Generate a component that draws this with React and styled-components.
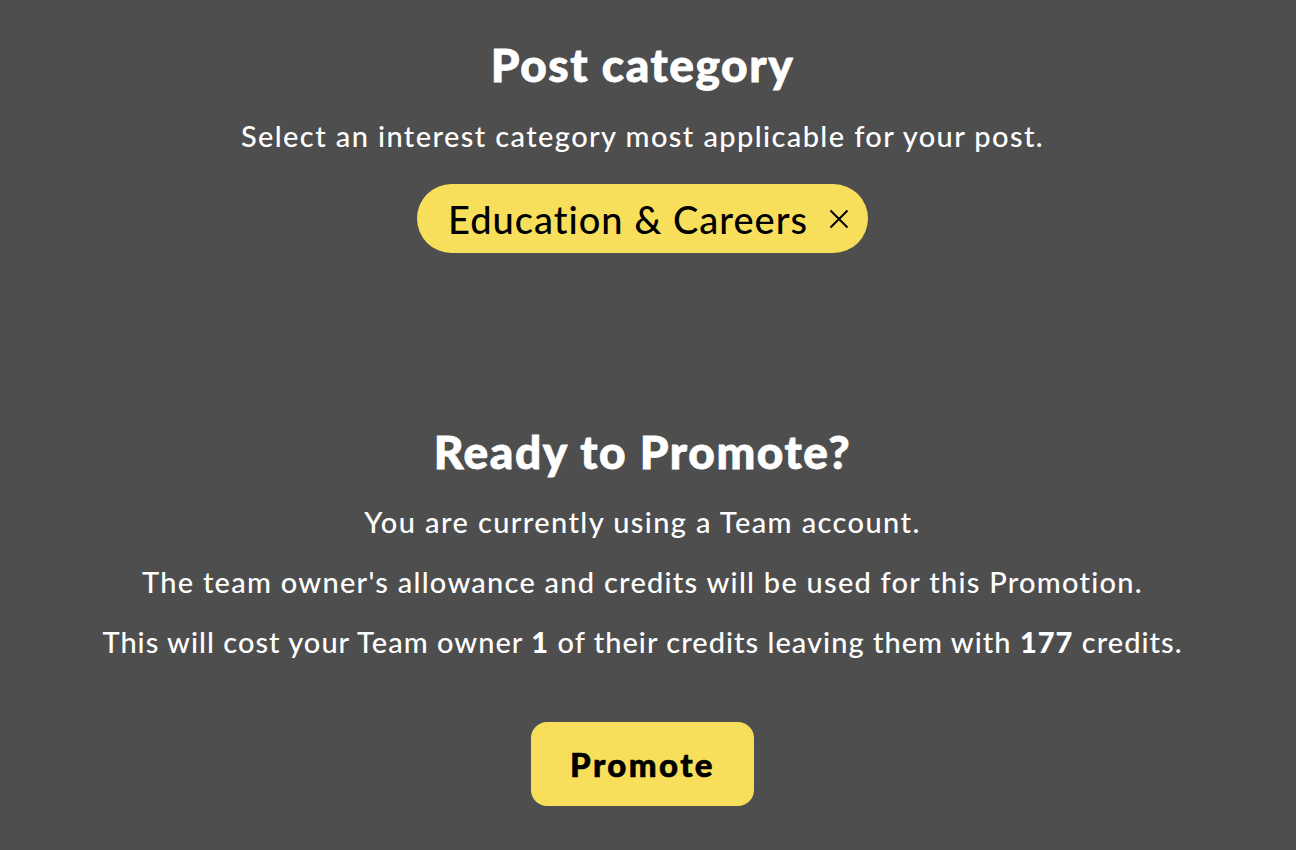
import React from "react";
import styled, { createGlobalStyle } from "styled-components";

const Global = createGlobalStyle`
  html, body { margin: 0; padding: 0; background: #4e4e4e; }
  body { font-family: Lato, "Noto Sans", sans-serif; color: #ffffff; }
`;

const Page = styled.main`
  min-height: 850px;
  display: flex;
  flex-direction: column;
  align-items: center;
  padding: 37px 11px 0 0;
  box-sizing: border-box;
`;

const Section = styled.section`
  display: flex;
  flex-direction: column;
  align-items: center;
  text-align: center;
  margin-top: ${(p) => p.$mt || 0}px;
`;

const Title = styled.h2`
  margin: 0;
  font-size: 46px;
  font-weight: 900;
  line-height: 56px;
  letter-spacing: 1.6px;
  -webkit-text-stroke: 0.8px #ffffff;
`;

const Text = styled.p`
  margin: ${(p) => p.$mt || 0}px 0 0;
  font-size: 29px;
  font-weight: 500;
  line-height: 36px;
  letter-spacing: ${(p) => p.$ls ?? 1.4}px;
  strong { font-weight: 900; }
`;

const Chip = styled.div`
  margin-top: 30px;
  height: 69px;
  padding: 0 19px 0 31px;
  border-radius: 35px;
  background: #f7df5b;
  color: #000;
  display: flex;
  align-items: center;
  gap: 21px;
  font-size: 38px;
  font-weight: 500;
  letter-spacing: 1px;
  box-sizing: border-box;
`;

const Close = styled.svg`
  width: 20px;
  height: 20px;
  flex: none;
`;

const Button = styled.button`
  margin-top: 62px;
  width: 223px;
  height: 84px;
  border: none;
  border-radius: 16px;
  background: #f7df5b;
  color: #000;
  font-family: inherit;
  font-size: 33px;
  font-weight: 900;
  letter-spacing: 2.4px;
  -webkit-text-stroke: 0.6px #000;
  cursor: pointer;
  padding: 0;
`;

export default function App() {
  return (
    <>
      <Global />
      <Page>
        <Section>
          <Title as="h1">Post category</Title>
          <Text $mt={25}>Select an interest category most applicable for your post.</Text>
          <Chip>
            Education &amp; Careers
            <Close viewBox="0 0 20 20" fill="none" stroke="#000" strokeWidth="2">
              <path d="M1.5 1.5 L18.5 18.5 M18.5 1.5 L1.5 18.5" />
            </Close>
          </Chip>
        </Section>
        <Section $mt={171}>
          <Title>Ready to Promote?</Title>
          <Text $mt={24}>You are currently using a Team account.</Text>
          <Text $mt={24} $ls={1.25}>The team owner's allowance and credits will be used for this Promotion.</Text>
          <Text $mt={24} $ls={1.02}>
            This will cost your Team owner <strong>1</strong> of their credits leaving them with <strong>177</strong> credits.
          </Text>
          <Button type="button">Promote</Button>
        </Section>
      </Page>
    </>
  );
}
